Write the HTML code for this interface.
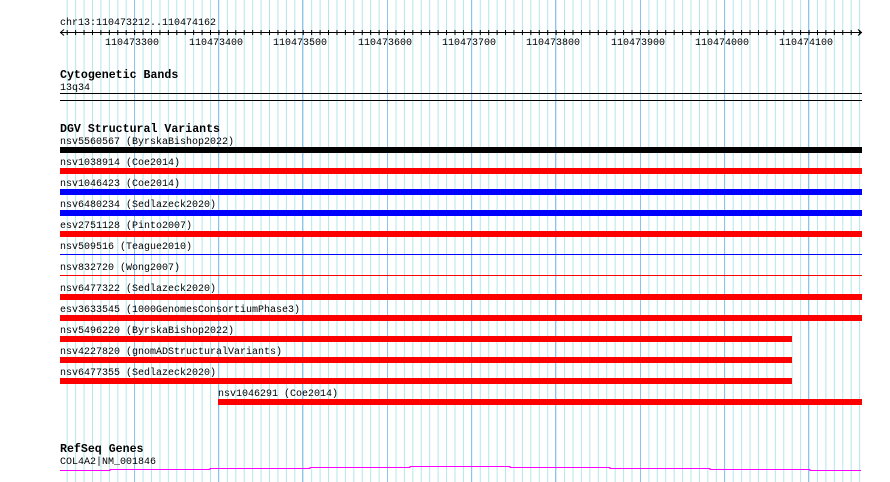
<!DOCTYPE html>
<html><head><style>
html,body{margin:0;padding:0;background:#fff;}
svg{display:block;}
text{font-family:"Liberation Mono","DejaVu Sans Mono",monospace;font-size:10px;fill:#000;}
.h{font-weight:bold;font-size:11.6px;}
</style></head><body>
<svg width="890" height="482" xmlns="http://www.w3.org/2000/svg">
<defs>
<pattern id="g" x="66.7" y="0" width="8.43" height="482" patternUnits="userSpaceOnUse">
<line x1="0.5" y1="0" x2="0.5" y2="482" stroke="#b4e6ec" stroke-width="1"/>
</pattern>
<pattern id="t" x="66.7" y="0" width="8.43" height="10" patternUnits="userSpaceOnUse">
<line x1="0.5" y1="0" x2="0.5" y2="10" stroke="#000" stroke-width="1"/>
</pattern>
</defs>
<rect x="60" y="0" width="802" height="482" fill="url(#g)"/>
<g stroke="#8cc4ee" stroke-width="1">
<line x1="134.5" y1="0" x2="134.5" y2="482"/><line x1="218.5" y1="0" x2="218.5" y2="482"/>
<line x1="302.5" y1="0" x2="302.5" y2="482"/><line x1="387.5" y1="0" x2="387.5" y2="482"/>
<line x1="471.5" y1="0" x2="471.5" y2="482"/><line x1="555.5" y1="0" x2="555.5" y2="482"/>
<line x1="640.5" y1="0" x2="640.5" y2="482"/><line x1="724.5" y1="0" x2="724.5" y2="482"/>
<line x1="808.5" y1="0" x2="808.5" y2="482"/>
</g>
<text x="60" y="25">chr13:110473212..110474162</text>
<line x1="60" y1="32.5" x2="862" y2="32.5" stroke="#000"/>
<rect x="60" y="30" width="802" height="5" fill="url(#t)"/>
<path d="M64 29.5 L60.5 32.5 L64 35.5 M858 29.5 L861.5 32.5 L858 35.5" stroke="#000" fill="none"/>
<g>
<text x="105" y="45">110473300</text><text x="189" y="45">110473400</text>
<text x="273" y="45">110473500</text><text x="358" y="45">110473600</text>
<text x="442" y="45">110473700</text><text x="526" y="45">110473800</text>
<text x="611" y="45">110473900</text><text x="695" y="45">110474000</text>
<text x="779" y="45">110474100</text>
</g>
<text class="h" x="60" y="78">Cytogenetic Bands</text>
<text x="60" y="90">13q34</text>
<rect x="60" y="93" width="802" height="1" fill="#000"/>
<rect x="60" y="100" width="802" height="1" fill="#000"/>
<text class="h" x="60" y="132">DGV Structural Variants</text>
<text x="60" y="144">nsv5560567 (ByrskaBishop2022)</text>
<rect x="60" y="147" width="802" height="6" fill="#000"/>
<text x="60" y="165">nsv1038914 (Coe2014)</text>
<rect x="60" y="168" width="802" height="6" fill="#f00"/>
<text x="60" y="186">nsv1046423 (Coe2014)</text>
<rect x="60" y="189" width="802" height="6" fill="#00f"/>
<text x="60" y="207">nsv6480234 (Sedlazeck2020)</text>
<rect x="60" y="210" width="802" height="6" fill="#00f"/>
<text x="60" y="228">esv2751128 (Pinto2007)</text>
<rect x="60" y="231" width="802" height="6" fill="#f00"/>
<text x="60" y="249">nsv509516 (Teague2010)</text>
<rect x="60" y="254" width="802" height="1" fill="#00f"/>
<text x="60" y="270">nsv832720 (Wong2007)</text>
<rect x="60" y="275" width="802" height="1" fill="#f00"/>
<text x="60" y="291">nsv6477322 (Sedlazeck2020)</text>
<rect x="60" y="294" width="802" height="6" fill="#f00"/>
<text x="60" y="312">esv3633545 (1000GenomesConsortiumPhase3)</text>
<rect x="60" y="315" width="802" height="6" fill="#f00"/>
<text x="60" y="333">nsv5496220 (ByrskaBishop2022)</text>
<rect x="60" y="336" width="732" height="6" fill="#f00"/>
<text x="60" y="354">nsv4227820 (gnomADStructuralVariants)</text>
<rect x="60" y="357" width="732" height="6" fill="#f00"/>
<text x="60" y="375">nsv6477355 (Sedlazeck2020)</text>
<rect x="60" y="378" width="732" height="6" fill="#f00"/>
<text x="218" y="396">nsv1046291 (Coe2014)</text>
<rect x="218" y="399" width="644" height="6" fill="#f00"/>
<text class="h" x="60" y="452">RefSeq Genes</text>
<text x="60" y="464">COL4A2|NM_001846</text>
<path d="M60 470.5 H110 V469.5 H210 V468.5 H310 V467.5 H410 V466.5 H510 V467.5 H610 V468.5 H710 V469.5 H810 V470.5 H861" stroke="#f0f" fill="none" stroke-width="1"/>
</svg>
</body></html>
